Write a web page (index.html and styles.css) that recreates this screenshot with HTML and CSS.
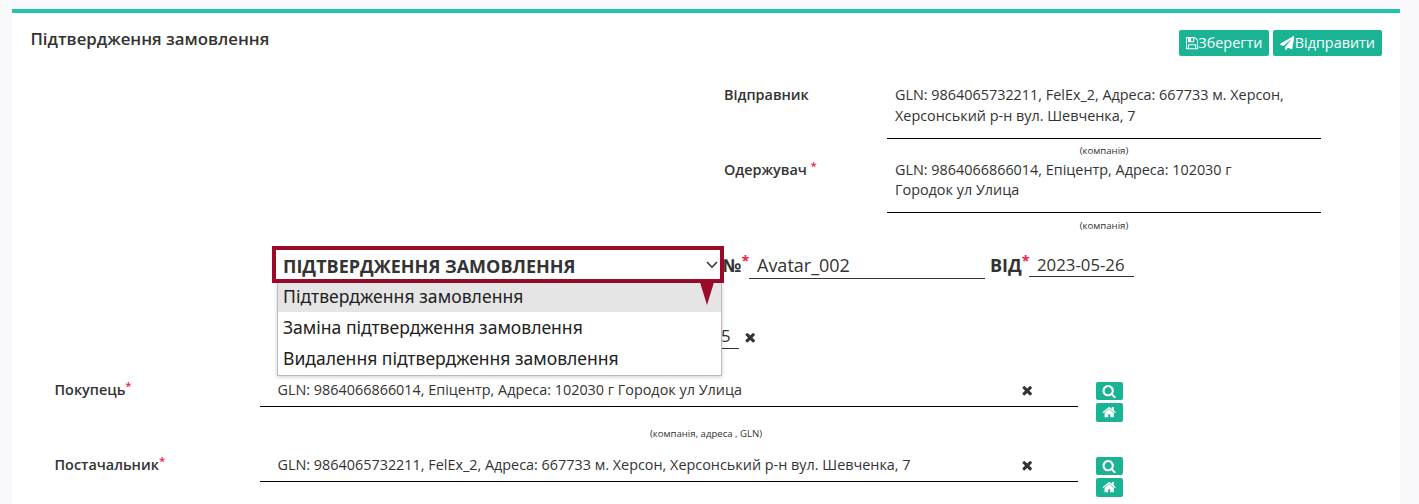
FILE: index.html
```html
<!DOCTYPE html>
<html lang="uk">
<head>
<meta charset="utf-8">
<title>Підтвердження замовлення</title>
<link rel="stylesheet" href="styles.css">
</head>
<body>
<svg class="sprite" aria-hidden="true">
  <symbol id="i-times" viewBox="0 0 1792 1792"><path d="M1490 1322q0 40-28 68l-136 136q-28 28-68 28t-68-28l-294-294-294 294q-28 28-68 28t-68-28l-136-136q-28-28-28-68t28-68l294-294-294-294q-28-28-28-68t28-68l136-136q28-28 68-28t68 28l294 294 294-294q28-28 68-28t68 28l136 136q28 28 28 68t-28 68l-294 294 294 294q28 28 28 68z"/></symbol>
  <symbol id="i-search" viewBox="0 0 1792 1792"><path d="M1216 832q0-185-131.500-316.500t-316.500-131.500-316.500 131.500-131.500 316.500 131.500 316.500 316.500 131.500 316.500-131.500 131.500-316.500zm512 832q0 52-38 90t-90 38q-54 0-90-38l-343-342q-179 124-399 124-143 0-273.500-55.500t-225-150-150-225-55.500-273.500 55.500-273.500 150-225 225-150 273.500-55.500 273.500 55.500 225 150 150 225 55.500 273.500q0 220-124 399l343 343q37 37 37 90z"/></symbol>
  <symbol id="i-home" viewBox="0 0 1792 1792"><path d="M1472 992v480q0 26-19 45t-45 19h-384v-384h-256v384h-384q-26 0-45-19t-19-45v-480q0-1 .5-3t.5-3l575-474 575 474q1 2 1 6zm223-69l-62 74q-8 9-21 11h-3q-13 0-21-7l-692-577-692 577q-12 8-24 7-13-2-21-11l-62-74q-8-10-7-23.500t11-21.500l719-599q32-26 76-26t76 26l244 204v-195q0-14 9-23t23-9h192q14 0 23 9t9 23v408l219 182q10 8 11 21.500t-7 23.500z"/></symbol>
  <symbol id="i-save" viewBox="128 0 1536 1792"><path d="M512 1536h768v-384h-768v384zm896 0h128v-896q0-14-10-38.500t-20-34.500l-281-281q-10-10-34-20t-39-10v416q0 40-28 68t-68 28h-576q-40 0-68-28t-28-68v-416h-128v1280h128v-416q0-40 28-68t68-28h832q40 0 68 28t28 68v416zm-384-928v-320q0-13-9.500-22.500t-22.500-9.500h-192q-13 0-22.500 9.500t-9.500 22.500v320q0 13 9.500 22.500t22.500 9.500h192q13 0 22.500-9.500t9.500-22.500zm640 32v928q0 40-28 68t-68 28h-1344q-40 0-68-28t-28-68v-1344q0-40 28-68t68-28h928q40 0 88 20t76 48l280 280q28 28 48 76t20 88z"/></symbol>
  <symbol id="i-send" viewBox="0 0 1792 1792"><path d="M1764 11q33 24 27 64l-256 1536q-5 29-32 45-14 8-31 8-11 0-24-5l-453-185-242 295q-18 23-49 23-13 0-22-4-19-7-30.500-23.500t-11.500-36.500v-349l864-1059-1069 925-395-162q-37-14-40-55-2-40 32-59l1664-960q15-9 32-9 20 0 36 11z"/></symbol>
</svg>
<main class="panel">
  <header class="head">
    <h1 class="title">Підтвердження замовлення</h1>
    <div class="actions">
      <button class="btn"><svg class="ic-save"><use href="#i-save"/></svg>Зберегти</button>
      <button class="btn"><svg class="ic-send"><use href="#i-send"/></svg>Відправити</button>
    </div>
  </header>

  <section class="parties">
    <div class="party">
      <div class="label">Відправник</div>
      <div class="party-value">
        <div class="party-text">GLN: 9864065732211, FelEx_2, Адреса: 667733 м. Херсон,<br>Херсонський р-н вул. Шевченка, 7</div>
        <div class="hint">(компанія)</div>
      </div>
    </div>
    <div class="party">
      <div class="label">Одержувач <span class="req">*</span></div>
      <div class="party-value">
        <div class="party-text">GLN: 9864066866014, Епіцентр, Адреса: 102030 г<br>Городок ул Улица</div>
        <div class="hint">(компанія)</div>
      </div>
    </div>
  </section>

  <section class="doc">
    <div class="select">
      <span class="select-text">ПІДТВЕРДЖЕННЯ ЗАМОВЛЕННЯ</span>
      <svg class="chevron" viewBox="0 0 12 8"><path d="M1 1L6 6.200L11 1"/></svg>
      <ul class="menu">
        <li class="option active">Підтвердження замовлення</li>
        <li class="option">Заміна підтвердження замовлення</li>
        <li class="option">Видалення підтвердження замовлення</li>
      </ul>
      <svg class="pointer" viewBox="0 0 16 26"><path d="M0 0H16L8 26Z"/></svg>
    </div>
    <div class="doc-label num-label">№<span class="req">*</span></div>
    <div class="num">Avatar_002</div>
    <div class="doc-label date-label">ВІД<span class="req">*</span></div>
    <div class="date">2023-05-26</div>
  </section>

  <section class="order">
    <div class="order-date">5</div>
    <svg class="ic-times"><use href="#i-times"/></svg>
  </section>

  <section class="rows">
    <div class="row">
      <div class="label">Покупець<span class="req">*</span></div>
      <div class="row-value">
        <div class="row-line"><span>GLN: 9864066866014, Епіцентр, Адреса: 102030 г Городок ул Улица</span><svg class="ic-times"><use href="#i-times"/></svg></div>
        <div class="row-hint">(компанія, адреса , GLN)</div>
      </div>
      <div class="tools">
        <button class="tool"><svg class="ic-tool"><use href="#i-search"/></svg></button>
        <button class="tool"><svg class="ic-tool"><use href="#i-home"/></svg></button>
      </div>
    </div>
    <div class="row">
      <div class="label">Постачальник<span class="req">*</span></div>
      <div class="row-value">
        <div class="row-line"><span>GLN: 9864065732211, FelEx_2, Адреса: 667733 м. Херсон, Херсонський р-н вул. Шевченка, 7</span><svg class="ic-times"><use href="#i-times"/></svg></div>
      </div>
      <div class="tools">
        <button class="tool"><svg class="ic-tool"><use href="#i-search"/></svg></button>
        <button class="tool"><svg class="ic-tool"><use href="#i-home"/></svg></button>
      </div>
    </div>
  </section>
</main>
</body>
</html>
```
FILE: styles.css
```css
* { box-sizing: border-box; }
html, body { height: 100%; }
body {
  margin: 0;
  padding: 9px 19px 0 12px;
  overflow: hidden;
  background: #f9f9fb;
  color: #333;
  font: 14.4px/20px "Open Sans", sans-serif;
}
svg { display: block; fill: currentColor; flex: none; }
.sprite { display: none; }
.panel { height: 495px; overflow: hidden; background: #fff; border-top: 4px solid #23c6a8; }

.head { display: flex; justify-content: space-between; height: 72px; padding: 17px 18px 0 18.5px; }
.title { margin: 0; font-size: 16.8px; line-height: 18px; font-weight: 600; }
.actions { display: flex; gap: 4px; }
.btn {
  display: flex; align-items: center;
  height: 26px; padding: 0 7px; border: 0; border-radius: 2px;
  background: #1ab394; color: #fff;
  font: 14.4px/20px "Open Sans", sans-serif; white-space: nowrap;
}
.ic-save { width: 12.3px; height: 14.4px; }
.ic-send { width: 14.4px; height: 14.4px; }

.label { font-weight: 600; white-space: nowrap; }
.req { position: relative; top: -5px; color: #ed1c4b; font-size: 11.5px; line-height: 1; font-weight: 600; }

.parties { height: 161px; padding-left: 712px; }
.party { display: flex; height: 75px; }
.party .label { width: 163px; }
.party-value { width: 434px; }
.party-text { height: 54px; padding-left: 8px; line-height: 20.500px; border-bottom: 1px solid #000; white-space: nowrap; }
.party + .party .party-text { height: 53px; line-height: 20px; }
.hint { margin-top: 3px; font-size: 9.6px; line-height: 18px; text-align: center; }
.party + .party .hint { margin-top: 4px; }

.doc { display: flex; height: 37px; padding-left: 260px; font-size: 18px; }
.select {
  position: relative; display: flex; align-items: center; justify-content: space-between;
  width: 452px; height: 37px; padding: 3px 2px 0 7px;
  border: 4px solid #9b0b29; background: #fff;
}
.select-text { font-size: 18px; font-weight: 700; line-height: 28px; white-space: nowrap; }
.chevron { width: 12px; height: 8px; margin-top: -2px; fill: none; stroke: #333; stroke-width: 1.6; }
.menu {
  position: absolute; z-index: 2; left: 1px; top: 33px; width: 445px; height: 93px;
  margin: 0; padding: 0; list-style: none; background: #fff;
  border: 1px solid #bbb; border-top: 0; box-shadow: 0 1px 4px rgba(0,0,0,.2);
}
.option { height: 31px; padding-left: 5px; font: 17.55px/30px "Noto Sans", sans-serif; color: #222; white-space: nowrap; }
.active { height: 29px; line-height: 26px; letter-spacing: .06px; background: #e5e5e5; }
.pointer { position: absolute; z-index: 3; left: 423px; top: 29px; width: 16px; height: 26px; color: #9b0b29; }
.doc-label { font-weight: 700; line-height: 38px; white-space: nowrap; }
.doc-label .req { font-weight: 700; font-size: 14.4px; top: -6px; }
.num-label { width: 26px; margin-left: -1px; }
.num { width: 236px; height: 33px; padding-left: 8px; line-height: 39px; border-bottom: 1px solid #333; }
.date-label { width: 44px; padding-left: 5px; }
.date { width: 105px; height: 31px; padding-left: 8px; font-size: 16.8px; line-height: 37px; border-bottom: 1px solid #333; }

.order { display: flex; height: 97px; padding: 42px 0 0 709px; font-size: 16.8px; }
.order-date { width: 18px; height: 24px; line-height: 22px; border-bottom: 1px solid #333; }
.ic-times { width: 14.4px; height: 14.4px; }
.order .ic-times { margin: 5px 0 0 4px; }

.rows { padding-left: 42.5px; }
.row { display: flex; height: 75px; }
.row .label { width: 205.5px; }
.row-value { width: 818px; }
.row-line { display: flex; justify-content: space-between; height: 27px; padding: 0 44px 0 17.5px; border-bottom: 1px solid #000; white-space: nowrap; }
.row-line .ic-times { margin-top: 3px; }
.row-hint { margin-top: 18px; padding-left: 74px; font-size: 9.6px; line-height: 18px; text-align: center; }
.tools { display: flex; flex-direction: column; gap: 3px; margin: 2px 0 0 18px; }
.tool { display: flex; align-items: center; justify-content: center; width: 27px; height: 18px; padding: 0; border: 0; border-radius: 2px; background: #1ab394; color: #fff; }
.tool + .tool { height: 19px; }
.ic-tool { width: 14.4px; height: 14.4px; }
```
